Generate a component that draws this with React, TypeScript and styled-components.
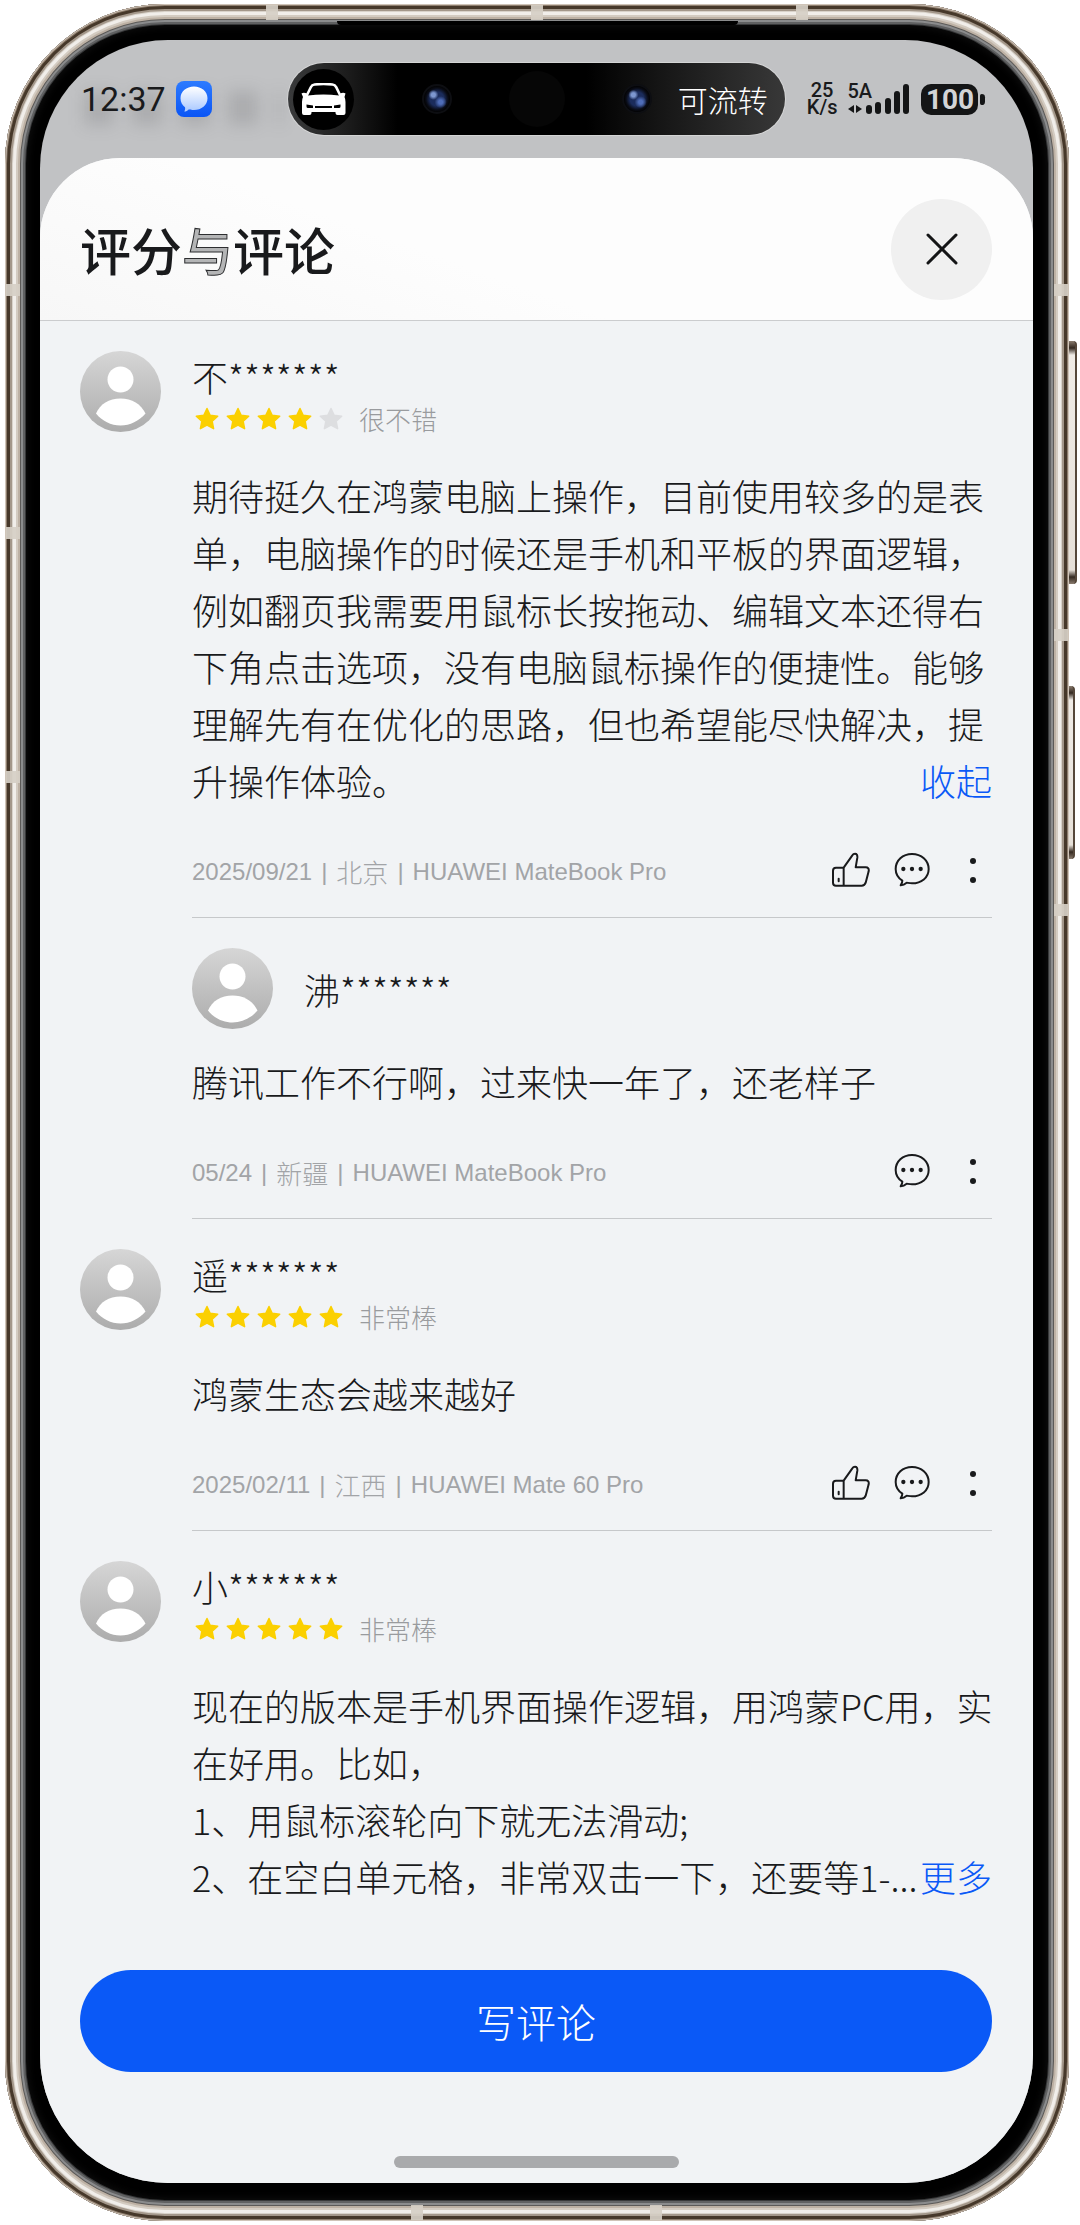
import React from 'react';
import styled, { createGlobalStyle } from 'styled-components';

const cjk = '"Noto Sans CJK SC", "Noto Sans", sans-serif';
const latin = '"Liberation Sans", "Noto Sans CJK SC", sans-serif';

const GlobalStyle = createGlobalStyle`
  *, *::before, *::after { box-sizing: border-box; }
  body { margin: 0; background: #fff; }
  h1, h2, p, ul { margin: 0; padding: 0; }
  ul { list-style: none; }
  button { border: 0; padding: 0; background: none; color: inherit; font: inherit; cursor: pointer; }
  svg { display: block; }
`;

/* ---------- device ---------- */

const Page = styled.div`
  padding: 4px 11px 4px 5px;
  font-family: ${cjk};
  font-weight: 300;
  color: #191a1c;
`;

const Frame = styled.div`
  position: relative;
  padding: 36px 36px 38px 35px;
  border-radius: 160px;
  background: #000;
  box-shadow:
    inset 0 0 0 1px #cfc4b8,
    inset 0 0 0 2px #8d7d6d,
    inset 0 0 0 5px #46382a,
    inset 0 0 0 7px #a3978a,
    inset 0 0 0 8px #d8d2ca,
    inset 0 0 0 11px #f1eeea,
    inset 0 0 0 13px #d3cbc1,
    inset 0 0 0 15px #bdb1a4,
    inset 0 0 0 16px #5c5a58,
    inset 0 0 0 18px #8b8c8d,
    inset 0 0 0 20px #606162,
    inset 0 0 0 21px #38393a,
    inset 0 0 8px 22px #101010;
`;

const Band = styled.i<{ $edge: 'left' | 'right' | 'top' | 'bottom'; $at: number }>`
  position: absolute;
  ${(p) => p.$edge}: 1px;
  ${(p) => (p.$edge === 'left' || p.$edge === 'right' ? 'top' : 'left')}: ${(p) => p.$at}px;
  width: ${(p) => (p.$edge === 'left' || p.$edge === 'right' ? 14 : 12)}px;
  height: ${(p) => (p.$edge === 'left' || p.$edge === 'right' ? 12 : 15)}px;
  background: rgba(214, 207, 197, 0.92);
`;

const SideKey = styled.i<{ $top: number; $height: number; $width: number }>`
  position: absolute;
  left: 100%;
  top: ${(p) => p.$top}px;
  width: ${(p) => p.$width}px;
  height: ${(p) => p.$height}px;
  border-radius: 0 4px 4px 0;
  border-right: 2px solid #55473a;
  background: linear-gradient(#8b7d70, #33281f 7px, #efebe6 14px, #e6e0d8 calc(100% - 14px), #33281f calc(100% - 7px), #8b7d70);
`;

const Earpiece = styled.i`
  position: absolute;
  top: 17px;
  left: 50%;
  width: 401px;
  height: 4px;
  margin-left: -200px;
  border-radius: 0 0 6px 6px;
  background: #000;
`;

const Screen = styled.div`
  display: flex;
  flex-direction: column;
  overflow: hidden;
  border-radius: 128px;
  background: #c1c2c4;
`;

/* ---------- status bar ---------- */

const StatusBar = styled.header`
  display: grid;
  grid-template-columns: 1fr 2fr 1fr;
  align-items: center;
  height: 118px;
  font-family: ${latin};
`;

const StatusLeft = styled.div`
  position: relative;
  display: flex;
  align-items: center;
  gap: 10px;
  padding-left: 41px;

  &::before {
    content: '';
    position: absolute;
    left: 44px;
    right: 6px;
    top: 12px;
    height: 34px;
    background: repeating-linear-gradient(90deg, rgba(60, 60, 64, 0.16) 0 30px, transparent 30px 48px);
    filter: blur(8px);
  }
`;

const Clock = styled.time`
  position: relative;
  font-family: Roboto, sans-serif;
  font-size: 34px;
  font-weight: 400;
  line-height: 40px;
`;

const MessageBadge = styled.span`
  position: relative;
  flex: none;
`;

const Island = styled.div`
  display: flex;
  align-items: center;
  height: 72px;
  padding: 0 17px 0 5px;
  border-radius: 36px;
  color: #fff;
  background: linear-gradient(90deg, #3a3b3c 0, #1c1c1c 12%, #000 22%, #000 60%, #1a1a1a 78%, #383838 100%);
  box-shadow: 0 0 0 1px rgba(225, 225, 225, 0.6);
`;

const IslandApp = styled.span`
  display: grid;
  place-items: center;
  width: 61px;
  height: 61px;
  border-radius: 50%;
  background: #000;
`;

const Cameras = styled.span`
  flex: 1;
  display: flex;
  align-items: center;
  justify-content: space-between;
  padding: 0 26px 0 68px;
`;

const Lens = styled.i`
  width: 30px;
  height: 30px;
  border: 2px solid #0d0e12;
  border-radius: 50%;
  background:
    radial-gradient(circle at 36% 34%, #7d97cf 0 2px, transparent 5px),
    radial-gradient(circle at 64% 62%, #4f6db8 0 2px, transparent 6px),
    radial-gradient(circle, #1b2c5c 0 7px, #090b14 11px, #030304 13px);
`;

const Sensor = styled.i`
  width: 56px;
  height: 56px;
  border-radius: 50%;
  background: #060606;
`;

const IslandText = styled.span`
  font-family: ${cjk};
  font-size: 30px;
  line-height: 44px;
  white-space: nowrap;
`;

const StatusRight = styled.div`
  display: flex;
  align-items: center;
  gap: 10px;
  padding-left: 22px;
  font-family: Roboto, sans-serif;
  font-weight: 500;
`;

const Speed = styled.span`
  display: flex;
  flex-direction: column;
  align-items: center;
  font-size: 20px;
  line-height: 17px;
`;

const Network = styled.span`
  display: grid;
  grid-template-columns: auto;
`;

const NetworkType = styled.span`
  grid-area: 1 / 1;
  font-size: 20px;
  line-height: 17px;
`;

const SignalArt = styled.svg`
  grid-area: 1 / 1;
`;

const Battery = styled.span`
  display: flex;
  align-items: center;
  gap: 2px;

  &::after {
    content: '';
    width: 5px;
    height: 11px;
    border-radius: 2px 4px 4px 2px;
    background: #141516;
  }
`;

const BatteryLevel = styled.span`
  width: 57px;
  height: 31px;
  border-radius: 10px;
  background: #141516;
  color: #d3d4d6;
  font-size: 28px;
  font-weight: 700;
  line-height: 32px;
  text-align: center;
`;

/* ---------- sheet ---------- */

const Sheet = styled.main`
  display: flex;
  flex-direction: column;
  overflow: hidden;
  border-radius: 80px 80px 0 0;
  background: #f1f3f5;
`;

const SheetHeader = styled.div`
  display: flex;
  align-items: center;
  justify-content: space-between;
  height: 163px;
  padding: 20px 41px 0 40px;
  border-bottom: 1px solid #cbccce;
  background: linear-gradient(200deg, #fdfdfd 60%, #f7f7f7);
`;

const Title = styled.h1`
  font-size: 51px;
  font-weight: 500;
  line-height: 72px;
`;

const OutlinedChar = styled.span`
  color: #b4b5b6;
  -webkit-text-stroke: 1px #2d2e30;
`;

const CloseButton = styled.button`
  display: grid;
  place-items: center;
  width: 101px;
  height: 101px;
  border-radius: 50%;
  background: #f0f0f0;
`;

const ReviewList = styled.ul`
  padding: 0 41px 0 40px;
`;

const ReviewItem = styled.li`
  display: grid;
  grid-template-columns: 81px minmax(0, 1fr);
  column-gap: 31px;
  padding-top: 30px;
`;

const ReviewMain = styled.article<{ $last?: boolean }>`
  border-bottom: ${(p) => (p.$last ? '0' : '1px solid #c6c8ca')};
`;

const Reply = styled.article`
  grid-column: 2;
  padding-top: 30px;
  border-bottom: 1px solid #c6c8ca;
`;

const ReplyHead = styled.div`
  display: flex;
  align-items: center;
  gap: 31px;
  margin-bottom: 24px;
`;

const UserName = styled.h2`
  font-size: 36px;
  font-weight: 300;
  line-height: 50px;
`;

const RatingRow = styled.div`
  display: flex;
  align-items: center;
  gap: 12px;
  height: 36px;
  margin-bottom: 30px;
`;

const Stars = styled.span`
  display: flex;
`;

const RatingText = styled.span`
  color: #999b9e;
  font-size: 26px;
  line-height: 36px;
`;

const Body = styled.div`
  display: grid;
`;

const BodyText = styled.p`
  grid-area: 1 / 1;
  margin-right: -8px;
  font-size: 36px;
  line-height: 57px;
  white-space: pre-line;
`;

const ToggleButton = styled.button`
  grid-area: 1 / 1;
  align-self: end;
  justify-self: end;
  background: #f1f3f5;
  color: #0a59f7;
  font-size: 36px;
  line-height: 57px;
`;

const MetaRow = styled.div`
  display: flex;
  align-items: center;
  justify-content: space-between;
  height: 50px;
  margin: 36px 0 22px;
`;

const Meta = styled.span`
  display: flex;
  gap: 9px;
  padding-top: 4px;
  color: #a2a4a7;
  font-family: ${latin};
  font-size: 24px;
  line-height: 36px;
  white-space: nowrap;
`;

const Place = styled.span`
  font-family: ${cjk};
  font-size: 26px;
`;

const Actions = styled.span`
  display: flex;
  gap: 23px;
`;

const IconButton = styled.button`
  width: 38px;
  height: 38px;
`;

const Footer = styled.footer`
  display: flex;
  flex-direction: column;
  align-items: center;
  gap: 84px;
  padding: 65px 41px 15px 40px;
`;

const WriteButton = styled.button`
  width: 100%;
  height: 102px;
  border-radius: 51px;
  background: #0a59f7;
  color: #fff;
  font-size: 40px;
  line-height: 58px;
`;

const HomeBar = styled.i`
  width: 285px;
  height: 12px;
  border-radius: 6px;
  background: #a9aaac;
`;

/* ---------- drawings ---------- */

const Avatar = () => (
  <svg width="81" height="81" viewBox="0 0 81 81" aria-hidden="true">
    <defs>
      <linearGradient id="avatar" x1="0" y1="0" x2="0" y2="1">
        <stop offset="0" stopColor="#d6d6d6" />
        <stop offset="1" stopColor="#acacac" />
      </linearGradient>
    </defs>
    <circle cx="40.500" cy="40.500" r="40.500" fill="url(#avatar)" />
    <circle cx="40.500" cy="28.500" r="13" fill="#fff" />
    <path d="M16 62.500C20 53 29 47.500 40.500 47.500S61 53 65.500 62.500C59 70 50 74.500 40.500 74.500S22 70 16 62.500Z" fill="#fff" />
  </svg>
);

const Star = ({ on }: { on: boolean }) => (
  <svg width="31" height="26" viewBox="0 0 31 26" aria-hidden="true">
    <path
      d="M15 2.500L18.200 9.300L25.700 10.200L20.200 15.300L21.600 22.700L15 19.100L8.400 22.700L9.800 15.300L4.300 10.200L11.800 9.300Z"
      fill={on ? '#fbd000' : '#dddee0'}
      stroke={on ? '#fbd000' : '#dddee0'}
      strokeWidth="1.500"
      strokeLinejoin="round"
    />
  </svg>
);

const ThumbIcon = () => (
  <svg width="38" height="38" viewBox="96 38 114 114" fill="none" stroke="#191a1c" strokeWidth="6" strokeLinejoin="round" strokeLinecap="round" aria-hidden="true">
    <path d="M131 88H108Q99 88 99 97V133Q99 142 108 142H185Q194 142 197 133L206 99Q208 87 197 87H167L172 58Q173 46 165 46Q160 46 157 51L131 88V142" />
    <path d="M116 121V129" />
  </svg>
);

const CommentIcon = () => (
  <svg width="38" height="38" viewBox="279 38 114 114" fill="none" stroke="#191a1c" strokeWidth="6" strokeLinejoin="round" aria-hidden="true">
    <path d="M307 127C293 118 287 106 287 92C287 66 308 47 336 47C364 47 386 66 386 92C386 118 364 135 336 135C330 135 326 134 320 133C315 137 309 140 302 141C305 136 307 132 307 127Z" />
    <g fill="#191a1c" stroke="none">
      <circle cx="310" cy="92" r="6.500" />
      <circle cx="336" cy="92" r="6.500" />
      <circle cx="362" cy="92" r="6.500" />
    </g>
  </svg>
);

const MoreIcon = () => (
  <svg width="38" height="38" viewBox="0 0 38 38" fill="#191a1c" aria-hidden="true">
    <circle cx="19" cy="10" r="3" />
    <circle cx="19" cy="29" r="3" />
  </svg>
);

const CloseIcon = () => (
  <svg width="34" height="34" viewBox="0 0 34 34" stroke="#141516" strokeWidth="3" strokeLinecap="round" aria-hidden="true">
    <path d="M3 3L31 31M31 3L3 31" />
  </svg>
);

const MessageIcon = () => (
  <svg width="36" height="36" viewBox="0 0 36 36" aria-label="信息">
    <defs>
      <linearGradient id="msg-bg" x1="0" y1="0" x2="0" y2="1">
        <stop offset="0" stopColor="#2d7bff" />
        <stop offset="1" stopColor="#0a55f5" />
      </linearGradient>
      <linearGradient id="msg-fg" x1="0" y1="0" x2="0" y2="1">
        <stop offset="0" stopColor="#fff" />
        <stop offset="1" stopColor="#a9c8ff" />
      </linearGradient>
    </defs>
    <rect width="36" height="36" rx="8" fill="url(#msg-bg)" />
    <path d="M18 5.500C25.500 5.500 31.500 10.500 31.500 17.200S25.500 29 18 29C16 29 14.500 28.800 13 28.200C11.500 29.500 10 30.500 8.300 30.600C9 29.200 9.400 27.800 9 26.300C6.300 24.200 4.500 21 4.500 17.200C4.500 10.500 10.500 5.500 18 5.500Z" fill="url(#msg-fg)" />
  </svg>
);

const CarIcon = () => (
  <svg width="45" height="33" viewBox="0 0 45 33" aria-hidden="true">
    <path d="M5.500 13L9.800 4.200Q11 1.800 13.600 1.500Q22.500 0.600 31.400 1.500Q34 1.800 35.200 4.200L39.500 13" fill="none" stroke="#fff" strokeWidth="2.600" />
    <path d="M0.500 10.500Q2.500 9 6 10.500L7 12.500Q22.500 10.500 38 12.500L39 10.500Q42.500 9 44.500 10.500L43.500 14Q44.500 16 44.500 19V30Q44.500 32 42.500 32H36.500Q34.500 32 34.500 30V29H10.500V30Q10.500 32 8.500 32H3Q1 32 1 30V19Q1 16 2 14Z" fill="#fff" />
    <path d="M5.500 21.500L12 22.500V25H7Q5.500 25 5.500 23.500ZM39.500 21.500L33 22.500V25H38Q39.500 25 39.500 23.500ZM14 23H31V25H14Z" fill="#000" />
  </svg>
);

const SignalIcon = () => (
  <SignalArt width="64" height="32" viewBox="0 0 64 32" fill="#141516" aria-label="信号">
    <path d="M1 26L7 22V30ZM15 26L9 22V30Z" />
    <rect x="19" y="22" width="6" height="9" rx="3" />
    <rect x="28" y="19" width="6" height="12" rx="3" />
    <rect x="38" y="15" width="6" height="16" rx="3" />
    <rect x="47" y="8" width="6" height="23" rx="3" />
    <rect x="56" y="1" width="6" height="30" rx="3" />
  </SignalArt>
);

/* ---------- content ---------- */

interface ReviewProps {
  name: string;
  stars: number;
  verdict: string;
  text: string;
  toggle?: string;
  meta?: [string, string, string];
  children?: React.ReactNode;
}

const MetaLine = ({ meta, likable }: { meta: [string, string, string]; likable?: boolean }) => (
  <MetaRow>
    <Meta>
      <span>{meta[0]}</span>
      <span>|</span>
      <Place>{meta[1]}</Place>
      <span>|</span>
      <span>{meta[2]}</span>
    </Meta>
    <Actions>
      {likable && (
        <IconButton aria-label="点赞">
          <ThumbIcon />
        </IconButton>
      )}
      <IconButton aria-label="回复">
        <CommentIcon />
      </IconButton>
      <IconButton aria-label="更多操作">
        <MoreIcon />
      </IconButton>
    </Actions>
  </MetaRow>
);

const Review = ({ name, stars, verdict, text, toggle, meta, children }: ReviewProps) => (
  <ReviewItem>
    <Avatar />
    <ReviewMain $last={!meta}>
      <UserName>{name}</UserName>
      <RatingRow>
        <Stars role="img" aria-label={`${stars} 星`}>
          {[1, 2, 3, 4, 5].map((n) => (
            <Star key={n} on={n <= stars} />
          ))}
        </Stars>
        <RatingText>{verdict}</RatingText>
      </RatingRow>
      <Body>
        <BodyText>{text}</BodyText>
        {toggle && <ToggleButton>{toggle}</ToggleButton>}
      </Body>
      {meta && <MetaLine meta={meta} likable />}
    </ReviewMain>
    {children}
  </ReviewItem>
);

export default function App() {
  return (
    <Page>
      <GlobalStyle />
      <Frame>
        <Earpiece />
        {[261, 526, 791].map((x) => (
          <Band key={x} $edge="top" $at={x} />
        ))}
        {[406, 645].map((x) => (
          <Band key={x} $edge="bottom" $at={x} />
        ))}
        {[280, 523, 767].map((y) => (
          <Band key={y} $edge="left" $at={y} />
        ))}
        {[280, 625, 900].map((y) => (
          <Band key={y} $edge="right" $at={y} />
        ))}
        <SideKey $top={337} $height={243} $width={8} />
        <SideKey $top={682} $height={173} $width={6} />
        <Screen>
          <StatusBar>
            <StatusLeft>
              <Clock>12:37</Clock>
              <MessageBadge>
                <MessageIcon />
              </MessageBadge>
            </StatusLeft>
            <Island>
              <IslandApp>
                <CarIcon />
              </IslandApp>
              <Cameras>
                <Lens />
                <Sensor />
                <Lens />
              </Cameras>
              <IslandText>可流转</IslandText>
            </Island>
            <StatusRight>
              <Speed>
                <span>25</span>
                <span>K/s</span>
              </Speed>
              <Network>
                <NetworkType>5A</NetworkType>
                <SignalIcon />
              </Network>
              <Battery>
                <BatteryLevel>100</BatteryLevel>
              </Battery>
            </StatusRight>
          </StatusBar>
          <Sheet>
            <SheetHeader>
              <Title>
                评分<OutlinedChar>与</OutlinedChar>评论
              </Title>
              <CloseButton aria-label="关闭">
                <CloseIcon />
              </CloseButton>
            </SheetHeader>
            <ReviewList>
              <Review
                name="不*******"
                stars={4}
                verdict="很不错"
                text="期待挺久在鸿蒙电脑上操作，目前使用较多的是表单，电脑操作的时候还是手机和平板的界面逻辑，例如翻页我需要用鼠标长按拖动、编辑文本还得右下角点击选项，没有电脑鼠标操作的便捷性。能够理解先有在优化的思路，但也希望能尽快解决，提升操作体验。"
                toggle="收起"
                meta={['2025/09/21', '北京', 'HUAWEI MateBook Pro']}
              >
                <Reply>
                  <ReplyHead>
                    <Avatar />
                    <UserName>沸*******</UserName>
                  </ReplyHead>
                  <BodyText>腾讯工作不行啊，过来快一年了，还老样子</BodyText>
                  <MetaLine meta={['05/24', '新疆', 'HUAWEI MateBook Pro']} />
                </Reply>
              </Review>
              <Review
                name="遥*******"
                stars={5}
                verdict="非常棒"
                text="鸿蒙生态会越来越好"
                meta={['2025/02/11', '江西', 'HUAWEI Mate 60 Pro']}
              />
              <Review
                name="小*******"
                stars={5}
                verdict="非常棒"
                text={'现在的版本是手机界面操作逻辑，用鸿蒙PC用，实在好用。比如，\n1、用鼠标滚轮向下就无法滑动;\n2、在空白单元格，非常双击一下，还要等1-...'}
                toggle="更多"
              />
            </ReviewList>
            <Footer>
              <WriteButton>写评论</WriteButton>
              <HomeBar />
            </Footer>
          </Sheet>
        </Screen>
      </Frame>
    </Page>
  );
}
